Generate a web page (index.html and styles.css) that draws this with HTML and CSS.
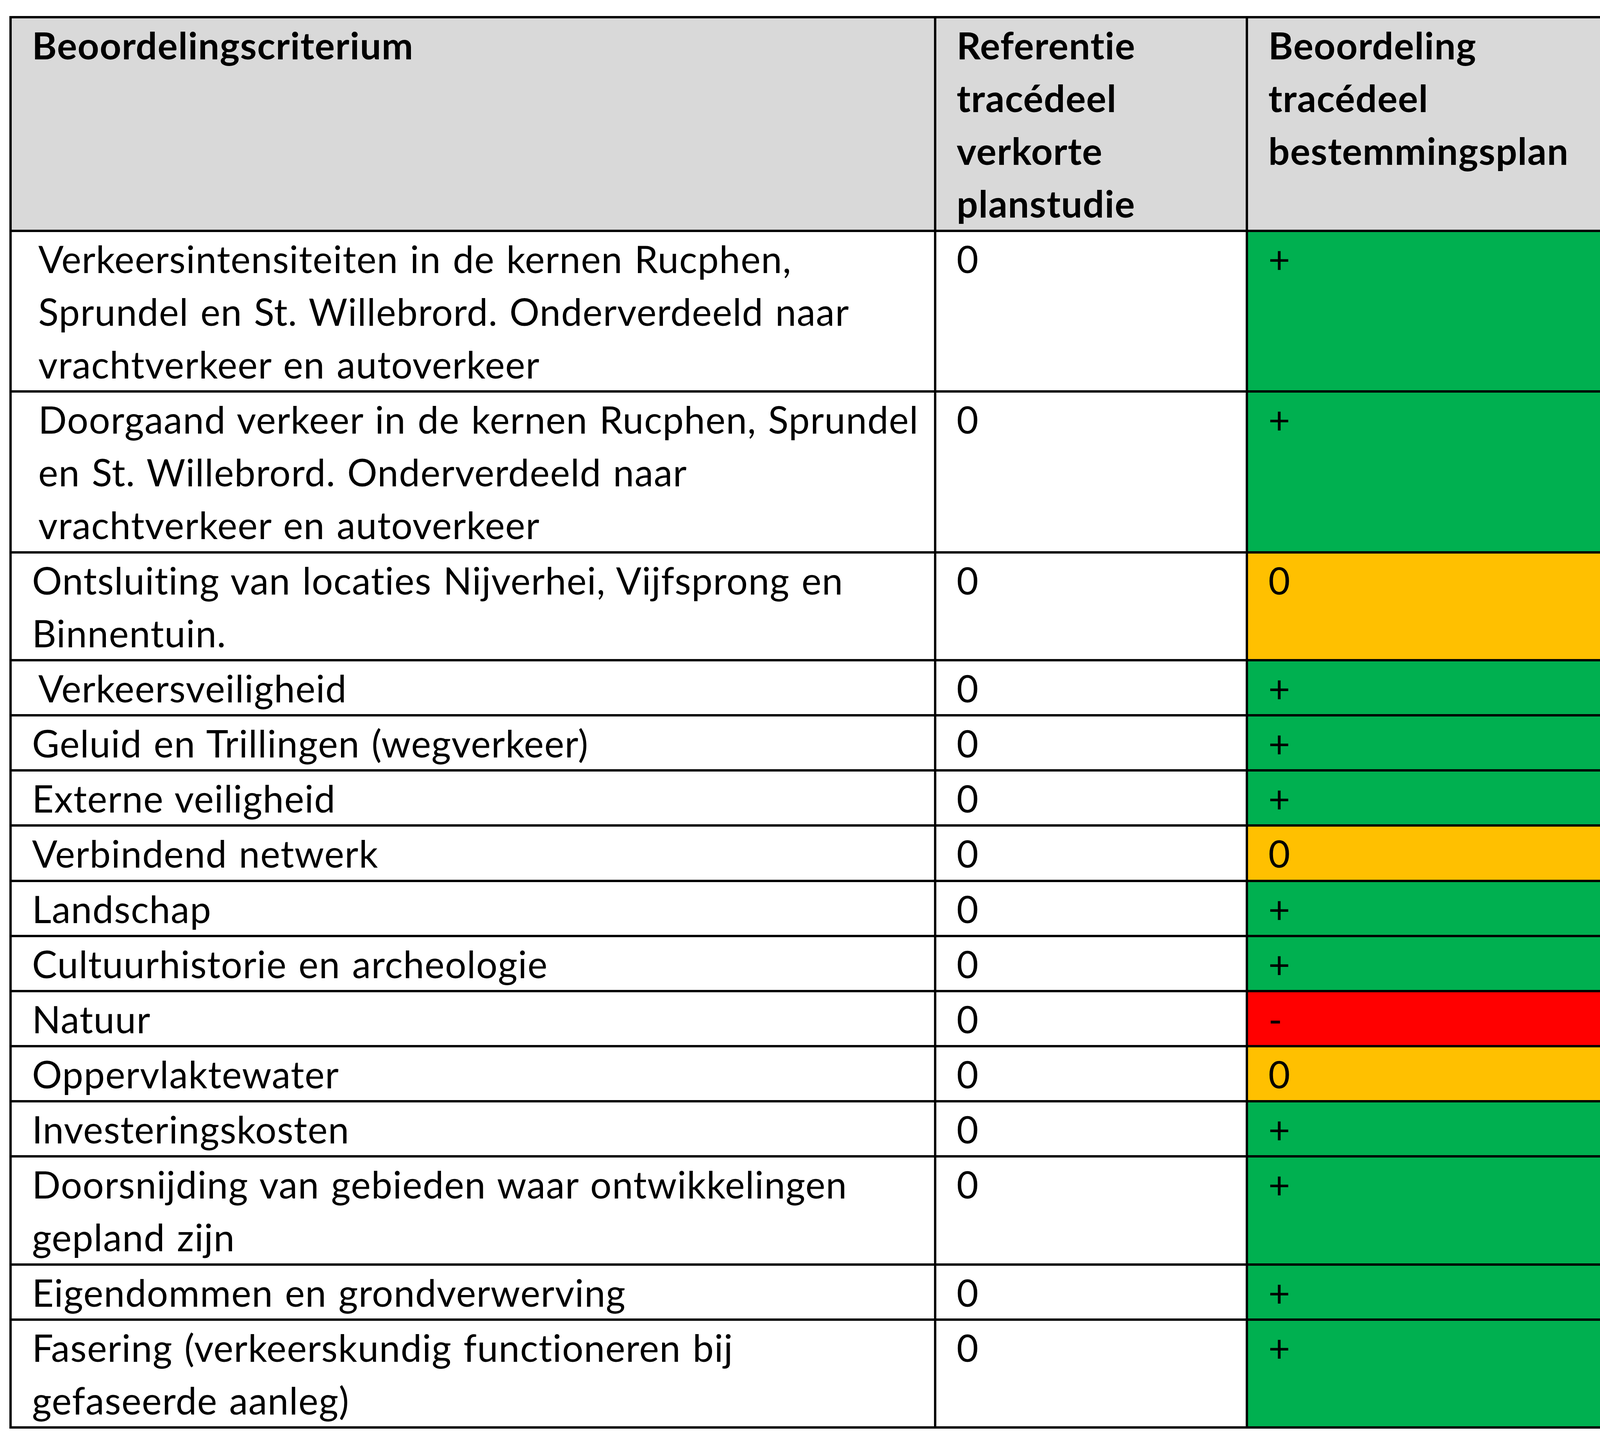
FILE: index.html
```html
<!DOCTYPE html>
<html lang="nl">
<head>
<meta charset="utf-8">
<title>Beoordelingscriteria</title>
<link rel="stylesheet" href="styles.css">
</head>
<body>
<table class="grid">
  <thead>
    <tr class="head">
      <th class="c1">Beoordelingscriterium</th>
      <th class="c2">Referentie<br>tracédeel<br>verkorte<br>planstudie</th>
      <th class="c3">Beoordeling<br>tracédeel<br>bestemmingsplan</th>
    </tr>
  </thead>
  <tbody>
    <tr>
      <td class="ind">Verkeersintensiteiten in de kernen Rucphen,<br>Sprundel en St. Willebrord. Onderverdeeld naar<br>vrachtverkeer en autoverkeer</td>
      <td>0</td>
      <td class="pos">+</td>
    </tr>
    <tr>
      <td class="ind">Doorgaand verkeer in de kernen Rucphen, Sprundel<br>en St. Willebrord. Onderverdeeld naar<br>vrachtverkeer en autoverkeer</td>
      <td>0</td>
      <td class="pos">+</td>
    </tr>
    <tr>
      <td>Ontsluiting van locaties Nijverhei, Vijfsprong en<br>Binnentuin.</td>
      <td>0</td>
      <td class="neu">0</td>
    </tr>
    <tr>
      <td class="ind">Verkeersveiligheid</td>
      <td>0</td>
      <td class="pos">+</td>
    </tr>
    <tr>
      <td>Geluid en Trillingen (wegverkeer)</td>
      <td>0</td>
      <td class="pos">+</td>
    </tr>
    <tr>
      <td>Externe veiligheid</td>
      <td>0</td>
      <td class="pos">+</td>
    </tr>
    <tr>
      <td>Verbindend netwerk</td>
      <td>0</td>
      <td class="neu">0</td>
    </tr>
    <tr>
      <td>Landschap</td>
      <td>0</td>
      <td class="pos">+</td>
    </tr>
    <tr>
      <td>Cultuurhistorie en archeologie</td>
      <td>0</td>
      <td class="pos">+</td>
    </tr>
    <tr>
      <td>Natuur</td>
      <td>0</td>
      <td class="neg">-</td>
    </tr>
    <tr>
      <td>Oppervlaktewater</td>
      <td>0</td>
      <td class="neu">0</td>
    </tr>
    <tr>
      <td>Investeringskosten</td>
      <td>0</td>
      <td class="pos">+</td>
    </tr>
    <tr>
      <td>Doorsnijding van gebieden waar ontwikkelingen<br>gepland zijn</td>
      <td>0</td>
      <td class="pos">+</td>
    </tr>
    <tr>
      <td>Eigendommen en grondverwerving</td>
      <td>0</td>
      <td class="pos">+</td>
    </tr>
    <tr>
      <td>Fasering (verkeerskundig functioneren bij<br>gefaseerde aanleg)</td>
      <td>0</td>
      <td class="pos">+</td>
    </tr>
  </tbody>
</table>
</body>
</html>
```
FILE: styles.css
```css
html, body {
  margin: 0;
  padding: 0;
  background: #ffffff;
}

body {
  padding: 41px 0 0 24px;
  font-family: Lato, "Open Sans", "Liberation Sans", sans-serif;
  color: #000000;
}

.grid {
  table-layout: fixed;
  width: 4144px;
  border-collapse: separate;
  border-spacing: 0;
  border: 6px solid #000000;
  font-size: 96px;
  line-height: 135.15px;
  letter-spacing: 1.4px;
  word-spacing: 4px;
}

.grid th,
.grid td {
  padding: 0 10px 0 52px;
  vertical-align: top;
  text-align: left;
  border-right: 6px solid #000000;
  border-bottom: 6px solid #000000;
  white-space: nowrap;
  overflow: hidden;
}

/* content-box widths: 2367 / 798 / 967 px columns including padding and rules */
.grid th.c1 { width: 2299px; }
.grid th.c2 { width: 730px; }
.grid th.c3 { width: 905px; }

.grid th:last-child,
.grid td:last-child {
  border-right: none;
}

.grid tbody tr:last-child td {
  border-bottom: none;
}

.head th {
  background: #d9d9d9;
  font-weight: 700;
}

.grid td.ind {
  padding-left: 68px;
}

.pos { background: #00b050; }
.neu { background: #ffc000; }
.neg { background: #ff0000; }
```
